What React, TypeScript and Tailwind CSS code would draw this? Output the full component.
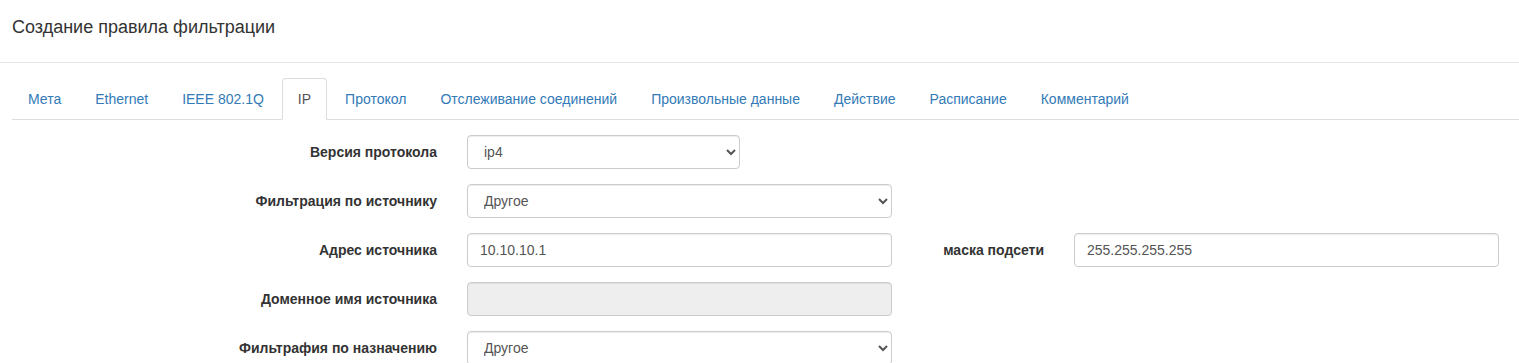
import React from "react";

const tabs = [
  "Мета",
  "Ethernet",
  "IEEE 802.1Q",
  "IP",
  "Протокол",
  "Отслеживание соединений",
  "Произвольные данные",
  "Действие",
  "Расписание",
  "Комментарий",
];

const ctrl =
  "h-[34px] border border-[#ccc] rounded-[4px] px-[12px] text-[14px] text-[#555] shadow-[inset_0_1px_1px_rgba(0,0,0,0.075)] outline-none";

function Label({ children, w = "w-[437px]" }: { children: React.ReactNode; w?: string }) {
  return (
    <div className={`${w} shrink-0 text-right font-bold text-[14px] text-[#333] leading-[20px]`}>{children}</div>
  );
}

export default function App() {
  return (
    <div className="bg-white min-h-screen font-['Liberation_Sans',Arial,sans-serif] text-[#333]">
      <div className="h-[63px] border-b border-[#e5e5e5] pt-[15px] pl-[12px]">
        <h4 className="text-[18px] leading-[25px] text-[#333] m-0">Создание правила фильтрации</h4>
      </div>
      <div className="pl-[12px] pt-[15px]">
        <ul className="flex border-b border-[#ddd] text-[14px] leading-[20px]">
          {tabs.map((t) => {
            const active = t === "IP";
            return (
              <li key={t} className="-mb-px mr-[2px]">
                <a
                  className={
                    active
                      ? "block px-[15px] py-[10px] border border-[#ddd] border-b-transparent rounded-t-[4px] bg-white text-[#555] cursor-default"
                      : "block px-[15px] py-[10px] border border-transparent rounded-t-[4px] text-[#337ab7] cursor-pointer"
                  }
                >
                  {t}
                </a>
              </li>
            );
          })}
        </ul>
        <div className="pt-[15px] flex flex-col gap-[15px] -ml-[12px]">
          <div className="flex items-center">
            <Label>Версия протокола</Label>
            <select defaultValue="ip4" className={`${ctrl} ml-[30px] w-[273px] bg-white`}>
              <option value="ip4">ip4</option>
              <option value="ip6">ip6</option>
            </select>
          </div>
          <div className="flex items-center">
            <Label>Фильтрация по источнику</Label>
            <select defaultValue="other" className={`${ctrl} ml-[30px] w-[425px] bg-white`}>
              <option value="other">Другое</option>
            </select>
          </div>
          <div className="flex items-center">
            <Label>Адрес источника</Label>
            <input defaultValue="10.10.10.1" className={`${ctrl} ml-[30px] w-[425px] bg-white`} />
            <div className="ml-[15px]">
              <Label w="w-[137px]">маска подсети</Label>
            </div>
            <input defaultValue="255.255.255.255" className={`${ctrl} ml-[30px] w-[425px] bg-white`} />
          </div>
          <div className="flex items-center">
            <Label>Доменное имя источника</Label>
            <input disabled className={`${ctrl} ml-[30px] w-[425px] bg-[#eee]`} />
          </div>
          <div className="flex items-center">
            <Label>Фильтрафия по назначению</Label>
            <select defaultValue="other" className={`${ctrl} ml-[30px] w-[425px] bg-white`}>
              <option value="other">Другое</option>
            </select>
          </div>
        </div>
      </div>
    </div>
  );
}
